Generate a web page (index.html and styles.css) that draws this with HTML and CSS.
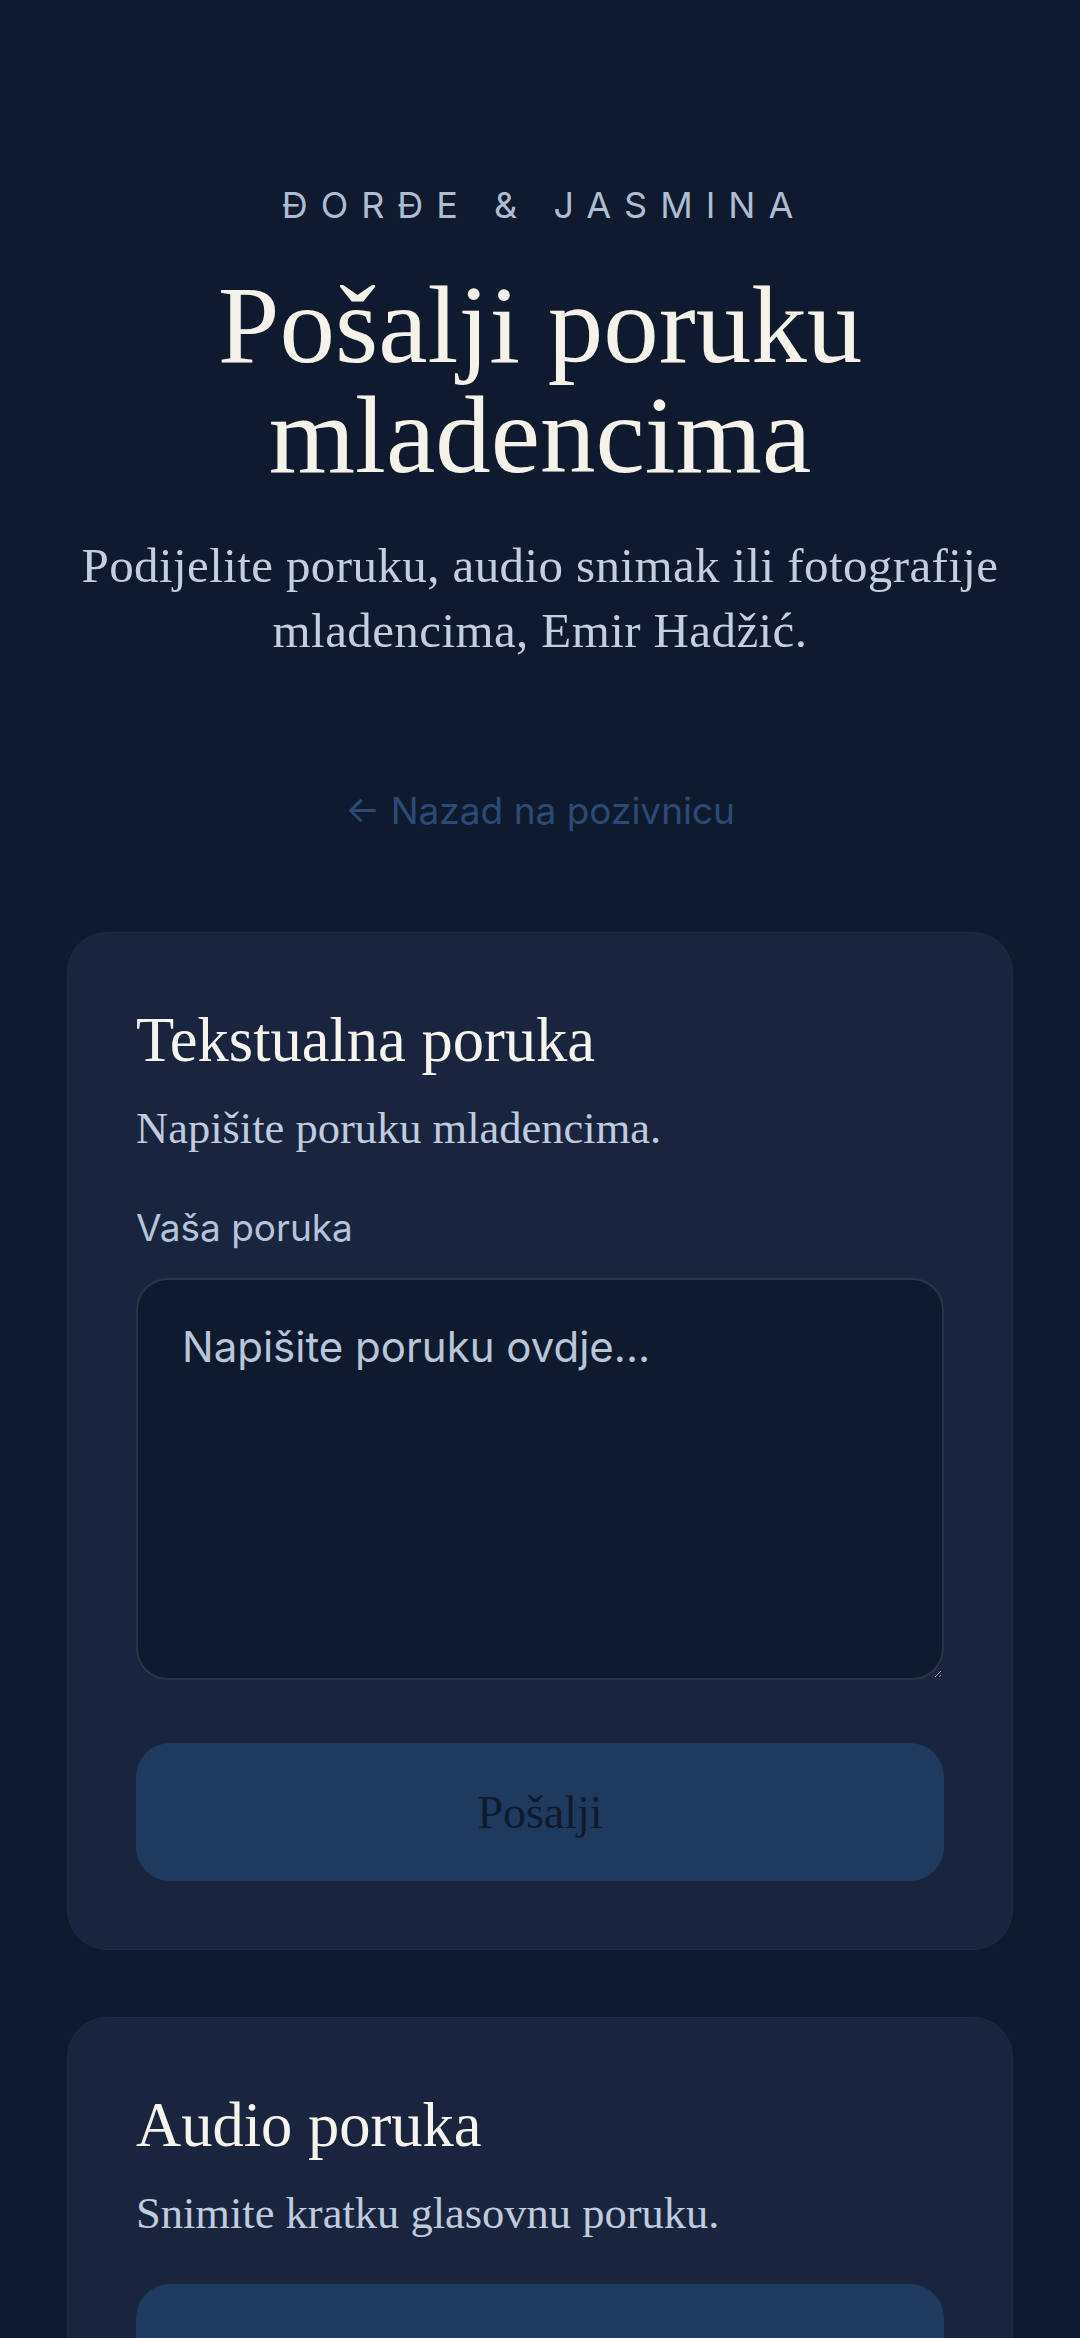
FILE: index.html
```html
<!DOCTYPE html>
<html lang="bs">
<head>
<meta charset="utf-8">
<title>Pošalji poruku mladencima</title>
<link rel="stylesheet" href="styles.css">
</head>
<body>
<main class="page">
  <header class="hero">
    <p class="eyebrow">ĐORĐE &amp; JASMINA</p>
    <h1 class="title">Pošalji poruku mladencima</h1>
    <p class="lead">Podijelite poruku, audio snimak ili fotografije mladencima, Emir Hadžić.</p>
    <a class="back" href="#">← Nazad na pozivnicu</a>
  </header>

  <section class="card">
    <h2 class="card-title">Tekstualna poruka</h2>
    <p class="card-sub">Napišite poruku mladencima.</p>
    <label class="label" for="msg">Vaša poruka</label>
    <textarea id="msg" class="textarea" placeholder="Napišite poruku ovdje..."></textarea>
    <button class="btn" type="button">Pošalji</button>
  </section>

  <section class="card">
    <h2 class="card-title">Audio poruka</h2>
    <p class="card-sub card-sub-tight">Snimite kratku glasovnu poruku.</p>
    <button class="btn" type="button"></button>
  </section>
</main>
</body>
</html>
```
FILE: styles.css
```css
html, body {
  margin: 0;
  padding: 0;
  background: #0f1a2e;
}
body {
  font-family: "Liberation Serif", "DejaVu Serif", serif;
  color: #f4f1ea;
}
.page {
  display: flex;
  flex-direction: column;
  padding: 180px 67px 0;
}
.hero {
  display: flex;
  flex-direction: column;
  align-items: center;
  text-align: center;
}
.eyebrow {
  margin: 0;
  font-family: Inter, "Noto Sans", sans-serif;
  font-size: 36px;
  line-height: 50px;
  letter-spacing: 13px;
  color: #aebdd3;
  padding-left: 8px;
}
.title {
  margin: 40px 0 0;
  font-weight: 400;
  font-size: 111px;
  line-height: 110px;
  color: #f5f2ea;
  max-width: 800px;
}
.lead {
  margin: 43px 0 0;
  font-size: 49px;
  line-height: 65px;
  letter-spacing: 0.4px;
  color: #c3cee0;
}
.back {
  margin-top: 123px;
  font-family: Inter, "Noto Sans", sans-serif;
  font-size: 37px;
  line-height: 50px;
  color: #2b4a76;
  text-decoration: none;
}
.card {
  display: flex;
  flex-direction: column;
  margin-top: 96px;
  padding: 68px;
  background: #19243f;
  border: 1px solid #1e2a47;
  border-radius: 40px;
}
.card + .card {
  margin-top: 67px;
}
.card-title {
  margin: 0;
  font-weight: 400;
  font-size: 62.5px;
  line-height: 78px;
  color: #f7f4ee;
}
.card-sub {
  margin: 19px 0 0;
  font-size: 44.5px;
  line-height: 60px;
  color: #c0cbde;
}
.label {
  margin-top: 45px;
  font-family: Inter, "Noto Sans", sans-serif;
  font-size: 37px;
  line-height: 50px;
  color: #b6c3da;
}
.textarea {
  margin-top: 25px;
  box-sizing: border-box;
  width: 100%;
  height: 402px;
  padding: 42px 44px;
  background: #0f1a2e;
  border: 2px solid #283448;
  border-radius: 32px;
  font-family: Inter, "Noto Sans", sans-serif;
  font-size: 42px;
  line-height: 1.2;
  color: #c3cee0;
  resize: vertical;
  outline: none;
}
.textarea::placeholder {
  color: #b9c5d9;
  opacity: 1;
}
.btn {
  margin-top: 63px;
  height: 138px;
  width: 100%;
  border: none;
  border-radius: 34px;
  background: #1f3a5f;
  font-family: "Liberation Serif", "DejaVu Serif", serif;
  font-size: 46px;
  color: #0f1a2e;
  cursor: pointer;
}
.card-sub-tight + .btn {
  margin-top: 41px;
}
```
